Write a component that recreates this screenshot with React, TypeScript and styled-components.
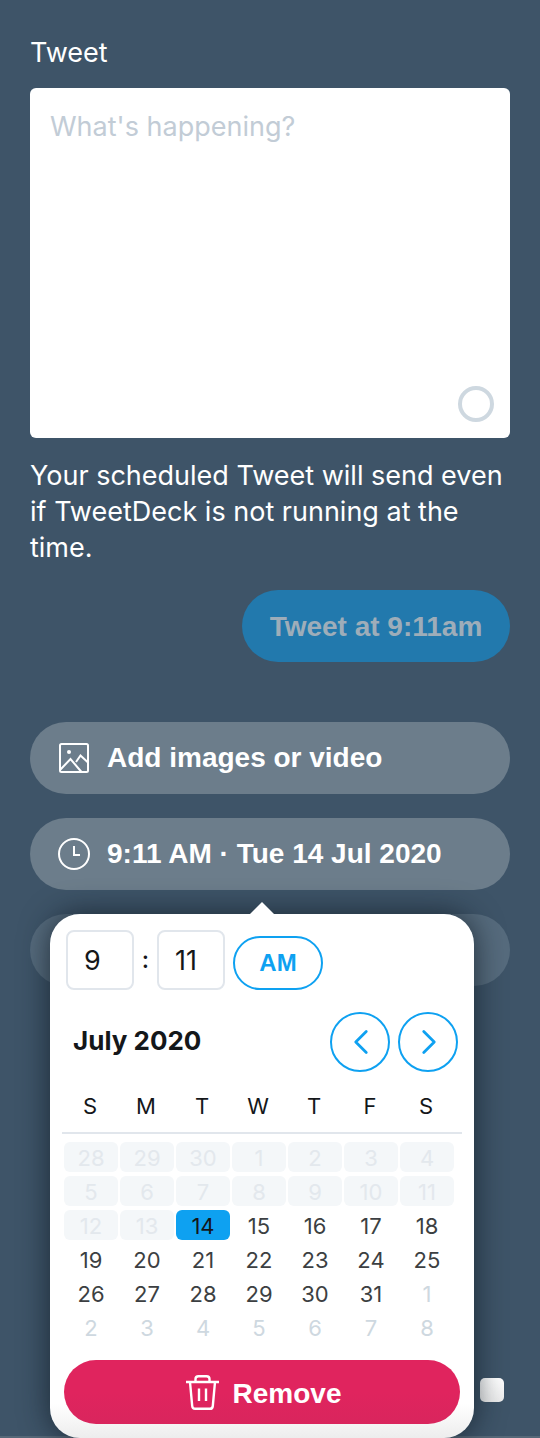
import React from 'react';
import styled, { createGlobalStyle } from 'styled-components';
import { ChevronLeft, ChevronRight } from 'lucide-react';

const GlobalStyle = createGlobalStyle`
  html, body {
    margin: 0;
    padding: 0;
    background: #3e5468;
    font-family: Inter, "Liberation Sans", sans-serif;
  }
  * { box-sizing: border-box; }
`;

const boldFont = `"Liberation Sans", Arial, sans-serif`;

const Page = styled.div`
  position: relative;
  width: 540px;
  height: 1438px;
  overflow: hidden;
  background: #3e5468;
  padding: 37px 30px 0;

  &::after {
    content: '';
    position: absolute;
    left: 0;
    right: 0;
    bottom: 0;
    height: 2px;
    background: #566878;
  }
`;

const Label = styled.div`
  color: #fff;
  font-size: 27px;
  line-height: 32px;
  margin-bottom: 19px;
`;

const Compose = styled.div`
  position: relative;
  height: 350px;
  background: #fff;
  border-radius: 6px;
  padding: 22px 20px;
  color: #c2ccd6;
  font-size: 27px;
  line-height: 34px;
`;

const Counter = styled.span`
  position: absolute;
  right: 16px;
  bottom: 16px;
  width: 36px;
  height: 36px;
  border: 4px solid #ced8e0;
  border-radius: 50%;
`;

const Note = styled.p`
  margin: 20px 0 0;
  color: #fff;
  font-size: 27px;
  line-height: 36px;
`;

const SendRow = styled.div`
  display: flex;
  justify-content: flex-end;
  margin-top: 24px;
`;

const SendButton = styled.div`
  height: 72px;
  width: 268px;
  border-radius: 36px;
  background: #2279ad;
  color: #9eadb9;
  font-family: ${boldFont};
  font-size: 28px;
  font-weight: 700;
  padding-top: 1px;
  display: flex;
  align-items: center;
  justify-content: center;
`;

const Actions = styled.div`
  display: flex;
  flex-direction: column;
  gap: 24px;
  margin-top: 60px;
`;

const ActionPill = styled.div<{ $dim?: boolean }>`
  height: 72px;
  border-radius: 36px;
  background: ${({ $dim }) => ($dim ? '#566b7d' : '#6c7d8b')};
  color: #fff;
  font-family: ${boldFont};
  font-size: 28px;
  font-weight: 700;
  display: flex;
  align-items: center;
  gap: 17px;
  padding-left: 28px;
`;

const Popover = styled.div`
  position: absolute;
  z-index: 1;
  left: 50px;
  top: 914px;
  width: 424px;
  height: 524px;
  background: linear-gradient(#fff 0, #fff 490px, #ededed 100%);
  border-radius: 30px;
  padding: 16px 12px 0;
  box-shadow: 0 0 30px rgba(15, 25, 35, 0.75);

  &::before {
    content: '';
    position: absolute;
    left: 200px;
    top: -12px;
    border-left: 12px solid transparent;
    border-right: 12px solid transparent;
    border-bottom: 12px solid #fff;
  }
`;

const TimeRow = styled.div`
  display: flex;
  align-items: flex-start;
  padding-left: 4px;
`;

const TimeInput = styled.div`
  width: 68px;
  height: 60px;
  border: 2px solid #e1e6ec;
  border-radius: 8px;
  color: #14171a;
  font-size: 27px;
  display: flex;
  align-items: center;
  padding-left: 16px;
`;

const Colon = styled.span`
  width: 23px;
  text-align: center;
  color: #14171a;
  font-size: 24px;
  font-weight: 500;
  line-height: 60px;
`;

const Meridiem = styled.div`
  width: 90px;
  height: 54px;
  margin: 6px 0 0 8px;
  border: 2px solid #0ea1f1;
  border-radius: 27px;
  color: #0ea1f1;
  font-family: ${boldFont};
  font-size: 24px;
  font-weight: 700;
  display: flex;
  align-items: center;
  justify-content: center;
`;

const MonthRow = styled.div`
  display: flex;
  align-items: center;
  justify-content: space-between;
  margin-top: 22px;
  padding: 0 4px 0 11px;
`;

const MonthTitle = styled.div`
  color: #14171a;
  font-size: 26px;
  font-weight: 700;
  padding-bottom: 4px;
`;

const NavGroup = styled.div`
  display: flex;
  gap: 8px;
`;

const NavButton = styled.div`
  width: 60px;
  height: 60px;
  border: 2px solid #0ea1f1;
  border-radius: 50%;
  color: #0ea1f1;
  padding-left: 2px;
  display: flex;
  align-items: center;
  justify-content: center;
`;

const Week = styled.div`
  display: grid;
  grid-template-columns: repeat(7, 54px);
  column-gap: 2px;
  margin-top: 19px;
  padding: 0 1px 11px;
  width: 400px;
  border-bottom: 2px solid #e1e6ec;
`;

const WeekDay = styled.div`
  color: #14171a;
  font-size: 22px;
  line-height: 30px;
  text-align: center;
`;

const Days = styled.div`
  display: grid;
  grid-template-columns: repeat(7, 54px);
  grid-auto-rows: 30px;
  gap: 4px 2px;
  margin-top: 8px;
  padding: 0 2px;
`;

type DayKind = 'past' | 'selected' | 'normal' | 'other';

const dayColors: Record<DayKind, { bg: string; fg: string }> = {
  past: { bg: '#f4f7f9', fg: '#e3e8ed' },
  selected: { bg: '#0ea1f1', fg: '#14171a' },
  normal: { bg: 'transparent', fg: '#3c3f42' },
  other: { bg: 'transparent', fg: '#ced8e0' },
};

const Day = styled.div<{ $kind: DayKind }>`
  background: ${({ $kind }) => dayColors[$kind].bg};
  color: ${({ $kind }) => dayColors[$kind].fg};
  border-radius: 6px;
  font-size: 22px;
  padding-top: 1px;
  display: flex;
  align-items: center;
  justify-content: center;
`;

const RemoveButton = styled.div`
  width: 396px;
  height: 64px;
  margin: 18px 0 0 2px;
  border-radius: 32px;
  background: linear-gradient(#e0245e 50%, #d9255d);
  color: #fff;
  font-family: ${boldFont};
  font-size: 28px;
  font-weight: 700;
  display: flex;
  align-items: center;
  justify-content: center;
  gap: 14px;
  padding: 3px 0 0 3px;
`;

const TrashSvg = styled.svg`
  margin-top: -3px;
`;

const Checkbox = styled.span`
  position: absolute;
  left: 480px;
  top: 1378px;
  width: 24px;
  height: 24px;
  border-radius: 5px;
  background: linear-gradient(#fff, #ececec);
`;

const days: [number, DayKind][] = [
  ...[28, 29, 30, 1, 2, 3, 4, 5, 6, 7, 8, 9, 10, 11, 12, 13].map((d): [number, DayKind] => [d, 'past']),
  [14, 'selected'],
  ...Array.from({ length: 17 }, (_, i): [number, DayKind] => [i + 15, 'normal']),
  ...[1, 2, 3, 4, 5, 6, 7, 8].map((d): [number, DayKind] => [d, 'other']),
];

const ImageIcon = () => (
  <svg width="32" height="32" viewBox="0 0 32 32" fill="none" stroke="#fff" strokeWidth="2">
    <rect x="2" y="2" width="28" height="28" rx="1.5" />
    <circle cx="11" cy="10" r="2" fill="#fff" stroke="none" />
    <path d="M2 28 L12.5 17 L23.5 30 M18 20 L22.5 13.5 L30 20.5" />
  </svg>
);

const ClockIcon = () => (
  <svg width="32" height="32" viewBox="0 0 32 32" fill="none" stroke="#fff" strokeWidth="2">
    <circle cx="16" cy="16" r="15" />
    <path d="M16 8 V17 H22" />
  </svg>
);

const TrashIcon = () => (
  <TrashSvg width="33" height="35" viewBox="0 0 33 35" fill="none" stroke="#fff" strokeWidth="2.4">
    <path d="M0 7 H33" />
    <path d="M4 7 L6.2 31 Q6.5 33.8 9 33.8 H24 Q26.5 33.8 26.8 31 L29 7" />
    <path d="M9.5 7 V4 Q9.5 1.2 12.5 1.2 H20.5 Q23.5 1.2 23.5 4 V7" />
    <path d="M13 13.5 V26 M20 13.5 V26" />
  </TrashSvg>
);

export default function App() {
  return (
    <Page>
      <GlobalStyle />
      <Label>Tweet</Label>
      <Compose>
        What's happening?
        <Counter />
      </Compose>
      <Note>Your scheduled Tweet will send even if TweetDeck is not running at the time.</Note>
      <SendRow>
        <SendButton>Tweet at 9:11am</SendButton>
      </SendRow>
      <Actions>
        <ActionPill>
          <ImageIcon />
          Add images or video
        </ActionPill>
        <ActionPill>
          <ClockIcon />
          9:11 AM · Tue 14 Jul 2020
        </ActionPill>
        <ActionPill $dim />
      </Actions>
      <Popover>
        <TimeRow>
          <TimeInput>9</TimeInput>
          <Colon>:</Colon>
          <TimeInput>11</TimeInput>
          <Meridiem>AM</Meridiem>
        </TimeRow>
        <MonthRow>
          <MonthTitle>July 2020</MonthTitle>
          <NavGroup>
            <NavButton>
              <ChevronLeft size={42} strokeWidth={1.6} />
            </NavButton>
            <NavButton>
              <ChevronRight size={42} strokeWidth={1.6} />
            </NavButton>
          </NavGroup>
        </MonthRow>
        <Week>
          {['S', 'M', 'T', 'W', 'T', 'F', 'S'].map((d, i) => (
            <WeekDay key={i}>{d}</WeekDay>
          ))}
        </Week>
        <Days>
          {days.map(([d, kind], i) => (
            <Day key={i} $kind={kind}>
              {d}
            </Day>
          ))}
        </Days>
        <RemoveButton>
          <TrashIcon />
          Remove
        </RemoveButton>
      </Popover>
      <Checkbox />
    </Page>
  );
}
